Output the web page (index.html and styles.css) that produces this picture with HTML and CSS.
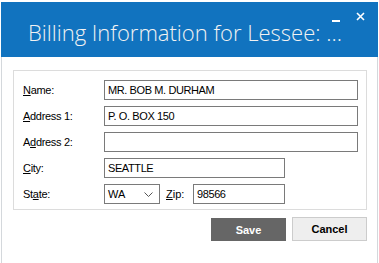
FILE: index.html
```html
<!DOCTYPE html>
<html lang="en">
<head>
    <meta charset="UTF-8">
    <title>Billing Information</title>
    <link rel="stylesheet" href="styles.css">
</head>
<body>
    <div class="window">
        <div class="titlebar">
            <div class="title">Billing Information for Lessee: ...</div>
            <div class="controls">
                <span class="min"></span>
                <svg class="close" width="9" height="9" viewBox="0 0 9 9">
                    <path d="M1 1L8 8M8 1L1 8" stroke="#fff" stroke-width="1.6"/>
                </svg>
            </div>
        </div>
        <div class="content">
            <div class="group">
                <div class="row">
                    <label class="lbl"><u>N</u>ame:</label>
                    <input class="box" type="text" value="MR. BOB M. DURHAM">
                </div>
                <div class="row">
                    <label class="lbl"><u>A</u>ddress 1:</label>
                    <input class="box" type="text" value="P. O. BOX 150">
                </div>
                <div class="row">
                    <label class="lbl">A<u>d</u>dress 2:</label>
                    <input class="box" type="text" value="">
                </div>
                <div class="row">
                    <label class="lbl"><u>C</u>ity:</label>
                    <input class="box short" type="text" value="SEATTLE">
                </div>
                <div class="row">
                    <label class="lbl">St<u>a</u>te:</label>
                    <div class="select">
                        <span>WA</span>
                        <svg width="9" height="5" viewBox="0 0 9 5">
                            <path d="M0.5 0.5L4.5 4.5L8.5 0.5" stroke="#555" fill="none"/>
                        </svg>
                    </div>
                    <label class="zip-lbl"><u>Z</u>ip:</label>
                    <input class="box zip" type="text" value="98566">
                </div>
            </div>
            <div class="buttons">
                <button class="btn save">Save</button>
                <button class="btn cancel">Cancel</button>
            </div>
        </div>
    </div>
</body>
</html>
```

FILE: styles.css
```css
body {
    margin: 0;
    background: #fff;
    font-family: "Liberation Sans", Arial, sans-serif;
}
.window {
    margin: 2px 1px 0 1px;
    width: 377px;
}
.titlebar {
    position: relative;
    height: 55px;
    background-color: #1173bf;
    color: #f2f2f2;
}
.title {
    padding: 15px 0 0 27px;
    font-family: "Open Sans", sans-serif;
    font-weight: 300;
    font-size: 22px;
    white-space: nowrap;
}
.controls {
    position: absolute;
    top: 10px;
    right: 13px;
    display: flex;
    align-items: flex-start;
    gap: 16px;
}
.min {
    display: block;
    width: 8px;
    height: 2px;
    margin-top: 8px;
    background: #fff;
}
.content {
    border: 1px solid #d4d8dc;
    border-top: none;
    height: 204px;
    padding: 13px 10px 0 11px;
}
.group {
    border: 1px solid #dcdcdc;
    padding: 9px 8px 5px 9px;
    display: flex;
    flex-direction: column;
    gap: 6px;
}
.row {
    display: flex;
    align-items: center;
    height: 20px;
}
.lbl {
    width: 81px;
    font-size: 11px;
    letter-spacing: -0.3px;
    color: #000;
}
.box {
    flex: 1;
    box-sizing: border-box;
    height: 20px;
    margin: 0;
    padding: 0 0 0 3px;
    border: 1px solid #7a7a7a;
    font-family: "Liberation Sans", Arial, sans-serif;
    font-size: 11px;
    letter-spacing: -0.4px;
    color: #000;
    outline: none;
}
.box.short {
    flex: none;
    width: 181px;
}
.select {
    box-sizing: border-box;
    width: 56px;
    height: 20px;
    border: 1px solid #7a7a7a;
    display: flex;
    align-items: center;
    justify-content: space-between;
    padding: 0 6px 0 3px;
    font-size: 11px;
}
.zip-lbl {
    width: 27px;
    padding-left: 6px;
    font-size: 11px;
}
.box.zip {
    flex: none;
    width: 92px;
}
.buttons {
    display: flex;
    justify-content: flex-end;
    gap: 6px;
    margin-top: 7px;
}
.btn {
    width: 75px;
    height: 24px;
    font-family: "Liberation Sans", Arial, sans-serif;
    font-size: 11px;
    font-weight: bold;
    border-radius: 0;
    cursor: pointer;
}
.save {
    background-color: #666;
    color: #fff;
    border: 1px solid #666;
    height: 23px;
    margin-top: 1px;
}
.cancel {
    background-color: #eee;
    color: #000;
    border: 1px solid #ccc;
}
```
